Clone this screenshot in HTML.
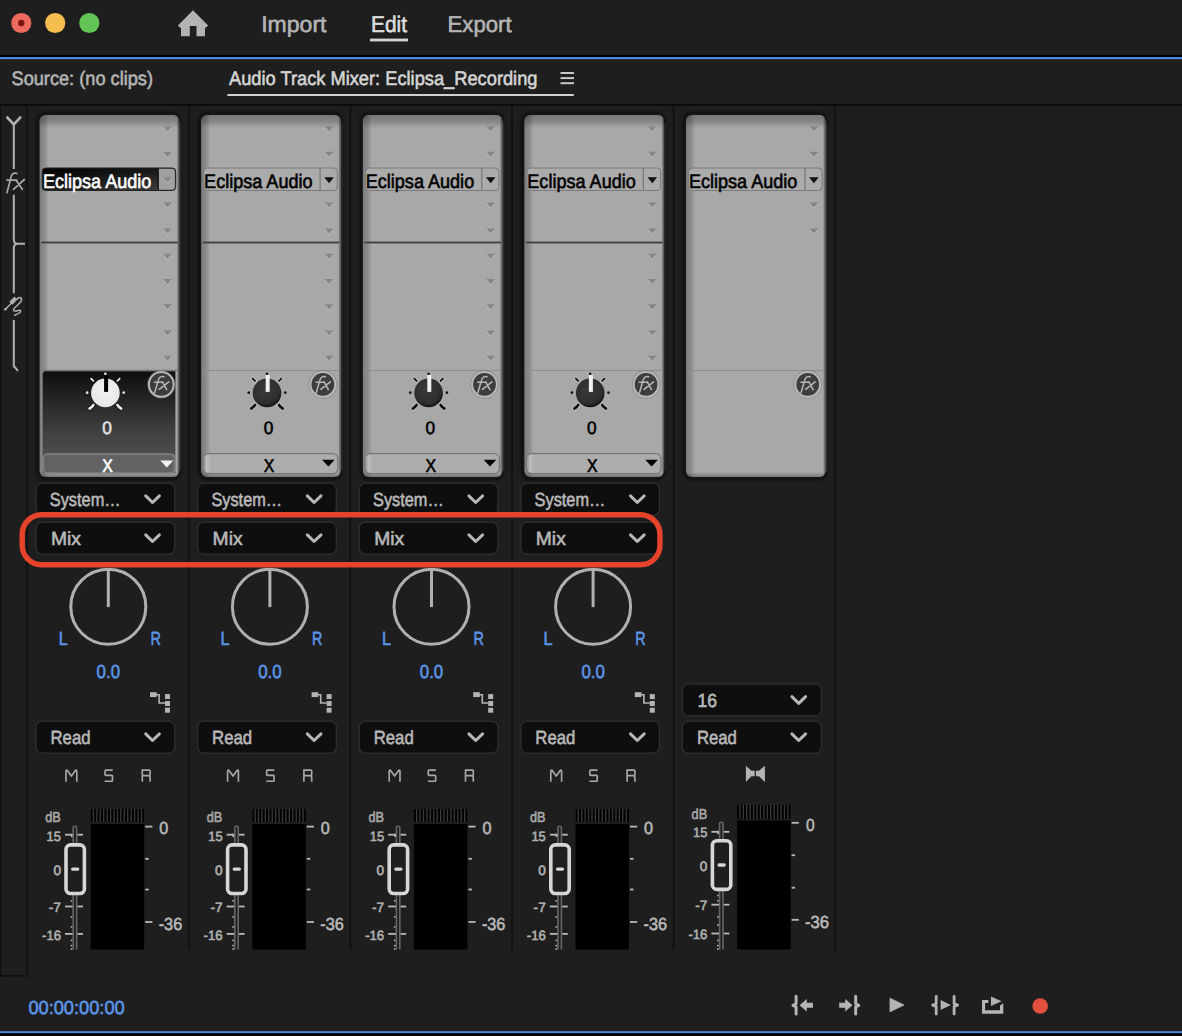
<!DOCTYPE html>
<html><head><meta charset="utf-8"><title>Audio Track Mixer</title>
<style>
html,body{margin:0;padding:0;background:#1e1e1e;overflow:hidden;}
svg{display:block;font-family:"Liberation Sans", sans-serif;}
text{text-rendering:geometricPrecision;}
</style></head><body>
<svg width="1182" height="1036" viewBox="0 0 1182 1036">
<defs>
<filter id="boxsh" x="-10%" y="-10%" width="120%" height="120%"><feGaussianBlur stdDeviation="2.2"/></filter>
<filter id="blur2" x="-50%" y="-50%" width="200%" height="200%"><feGaussianBlur stdDeviation="0.7"/></filter>
<filter id="blur1" x="-20%" y="-20%" width="140%" height="140%"><feGaussianBlur stdDeviation="0.6"/></filter>
<linearGradient id="leftsh" x1="0" y1="0" x2="1" y2="0">
<stop offset="0" stop-color="#000" stop-opacity="0.26"/><stop offset="0.55" stop-color="#000" stop-opacity="0.16"/><stop offset="1" stop-color="#000" stop-opacity="0"/></linearGradient>
<linearGradient id="rightsh" x1="0" y1="0" x2="1" y2="0">
<stop offset="0" stop-color="#000" stop-opacity="0"/><stop offset="1" stop-color="#000" stop-opacity="0.55"/></linearGradient>
<linearGradient id="botsh" x1="0" y1="0" x2="0" y2="1">
<stop offset="0" stop-color="#000" stop-opacity="0"/><stop offset="1" stop-color="#000" stop-opacity="0.3"/></linearGradient>
<linearGradient id="xbl" x1="0" y1="0" x2="1" y2="0">
<stop offset="0" stop-color="#000" stop-opacity="0.08"/><stop offset="0.3" stop-color="#fff" stop-opacity="0.22"/><stop offset="1" stop-color="#fff" stop-opacity="0"/></linearGradient>
<linearGradient id="topsh" x1="0" y1="0" x2="0" y2="1">
<stop offset="0" stop-color="#000" stop-opacity="0.3"/><stop offset="0.5" stop-color="#000" stop-opacity="0.2"/><stop offset="1" stop-color="#000" stop-opacity="0"/></linearGradient>
<linearGradient id="selknob" x1="0" y1="0" x2="0" y2="1">
<stop offset="0" stop-color="#0e0e0e"/><stop offset="0.6" stop-color="#404040"/><stop offset="1" stop-color="#575757"/></linearGradient>
<linearGradient id="seldd" x1="0" y1="0" x2="1" y2="1">
<stop offset="0" stop-color="#000"/><stop offset="0.5" stop-color="#1a1a1a"/><stop offset="1" stop-color="#444"/></linearGradient>
<radialGradient id="knobdark" cx="0.45" cy="0.4" r="0.6">
<stop offset="0" stop-color="#3a3a3a"/><stop offset="0.8" stop-color="#2e2e2e"/><stop offset="1" stop-color="#111"/></radialGradient>
<radialGradient id="knobwhite" cx="0.5" cy="0.45" r="0.6">
<stop offset="0" stop-color="#f2f2f2"/><stop offset="0.85" stop-color="#e8e8e8"/><stop offset="1" stop-color="#bdbdbd"/></radialGradient>
<pattern id="peaks" x="0" y="0" width="3.42" height="20" patternUnits="userSpaceOnUse">
<rect x="0" y="0" width="3.42" height="20" fill="#3a3a3a"/><rect x="0" y="0" width="2.1" height="20" fill="#000"/></pattern>
</defs>
<rect x="0" y="0" width="1182" height="1036" fill="#1e1e1e"/>

<circle cx="21.3" cy="23.0" r="10.1" fill="#ec6a5e"/><circle cx="21.3" cy="23.0" r="3.2" fill="#7a1510"/>
<circle cx="55.2" cy="23.0" r="10.1" fill="#f4bf4f"/>
<circle cx="89.3" cy="23.0" r="10.1" fill="#61c454"/>
<path d="M193 10.3 L208.1 25.4 L205 28.2 L205 36.3 L196.5 36.3 L196.5 26.1 L189.8 26.1 L189.8 36.3 L181 36.3 L181 28.2 L177.9 25.4 Z" fill="#b3b3b3"/>
<text x="261.20" y="32.00" font-size="22.8" fill="#b4b4b4" stroke="#b4b4b4" stroke-width="0.6" stroke-linejoin="round" textLength="65.30" lengthAdjust="spacingAndGlyphs" >Import</text>
<text x="371.00" y="32.00" font-size="22.8" fill="#dcdcdc" stroke="#dcdcdc" stroke-width="0.6" stroke-linejoin="round" textLength="36.00" lengthAdjust="spacingAndGlyphs" >Edit</text>
<rect x="370" y="38.6" width="38" height="2.8" fill="#d4d4d4"/>
<text x="447.60" y="32.00" font-size="22.8" fill="#b4b4b4" stroke="#b4b4b4" stroke-width="0.6" stroke-linejoin="round" textLength="64.00" lengthAdjust="spacingAndGlyphs" >Export</text>
<rect x="0" y="55" width="1182" height="2" fill="#000"/>
<rect x="0" y="57" width="1182" height="2.2" fill="#4f88e0"/>
<text x="11.50" y="85.00" font-size="19.5" fill="#b4b4b4" stroke="#b4b4b4" stroke-width="0.6" stroke-linejoin="round" textLength="141.50" lengthAdjust="spacingAndGlyphs" >Source: (no clips)</text>
<text x="229.00" y="84.80" font-size="19.5" fill="#d4d4d4" stroke="#d4d4d4" stroke-width="0.6" stroke-linejoin="round" textLength="308.50" lengthAdjust="spacingAndGlyphs" >Audio Track Mixer: Eclipsa_Recording</text>
<rect x="227.2" y="94" width="346.8" height="2" rx="1" fill="#d0d0d0"/>
<rect x="560.5" y="72.00" width="13.5" height="2" fill="#c8c8c8"/>
<rect x="560.5" y="77.10" width="13.5" height="2" fill="#c8c8c8"/>
<rect x="560.5" y="82.20" width="13.5" height="2" fill="#c8c8c8"/>
<rect x="0" y="104" width="1182" height="2" fill="#0c0c0c"/>
<rect x="0" y="104" width="1.2" height="873" fill="#0f0f0f"/>
<rect x="26.4" y="104" width="1.6" height="873" fill="#0f0f0f"/>
<rect x="0" y="975" width="28" height="1.6" fill="#0f0f0f"/>
<rect x="188.10" y="105" width="1.5" height="845" fill="#0f0f0f"/>
<rect x="349.70" y="105" width="1.5" height="845" fill="#0f0f0f"/>
<rect x="511.30" y="105" width="1.5" height="845" fill="#0f0f0f"/>
<rect x="672.90" y="105" width="1.5" height="845" fill="#0f0f0f"/>
<rect x="834.50" y="105" width="1.5" height="845" fill="#0f0f0f"/>
<path d="M7.4 117.6 L13.8 124.4 L20.2 117.6" fill="none" stroke="#b0b0b0" stroke-width="2.8" stroke-linecap="round" stroke-linejoin="round"/>
<rect x="12.8" y="123" width="2" height="46" fill="#b0b0b0"/>
<path d="M16.9 173.6 C14.2 172.2 11.8 173.6 11.2 176.5 L7 192.6 M7 180.2 L16.9 180.2 M13.5 189.3 L24.3 179.5 M15.9 179.9 L22.3 189.3" fill="none" stroke="#a8a8a8" stroke-width="1.7" stroke-linecap="round"/>
<path d="M13.8 194.7 L13.8 239.5 Q13.8 243.6 17.5 243.8 L25 243.8 M17.5 243.8 Q13.8 244.2 13.8 248 L13.8 293.2" fill="none" stroke="#b0b0b0" stroke-width="2"/>
<path d="M5.4 309.3 L11.1 303.5" stroke="#b0b0b0" stroke-width="1.5" stroke-linecap="round"/><circle cx="5.4" cy="309.3" r="1.3" fill="#b0b0b0"/>
<path d="M9.8 301.7 L14.5 297.1 L16.9 299.5 L12.5 304.2 Z" fill="#b0b0b0" stroke="#b0b0b0" stroke-width="1" stroke-linejoin="round"/>
<path d="M16.9 299.3 C18.5 297 21.5 296.5 21.6 299.8 C21.6 302 17 305.5 14.5 308 C12.5 310 13.6 311.2 15.5 311 C18 310.6 20.8 309.5 20.6 311.3 C20.4 313 16.5 314.3 14.5 315.3" fill="none" stroke="#b0b0b0" stroke-width="1.5" stroke-linecap="round"/>
<path d="M13.8 320 L13.8 366 L18 370.8" fill="none" stroke="#b0b0b0" stroke-width="2"/>
<rect x="37.70" y="113.00" width="142.00" height="366.00" rx="8" fill="#080808" filter="url(#boxsh)"/>
<rect x="179.50" y="123.00" width="1.6" height="348.00" fill="#333" opacity="0.8"/>
<rect x="39.70" y="115.00" width="139.50" height="362.00" rx="6" fill="#a8a8a8"/>
<clipPath id="bc0"><rect x="39.70" y="115.00" width="139.50" height="362.00" rx="6"/></clipPath>
<g clip-path="url(#bc0)">
<rect x="39.70" y="115.00" width="139.50" height="13" fill="url(#topsh)"/>
<rect x="39.70" y="115.00" width="9" height="362.00" fill="url(#leftsh)"/>
<rect x="39.70" y="472.00" width="139.50" height="5" fill="url(#botsh)"/>
</g>
<rect x="176.60" y="115.00" width="2.6" height="362.00" fill="url(#rightsh)" clip-path="url(#bc0)"/>
<path d="M163.10 127.40 L171.90 127.40 L167.50 132.60 Z" fill="#c8c8c8" opacity="0.7"/>
<path d="M163.10 126.40 L171.90 126.40 L167.50 131.60 Z" fill="#868686"/>
<path d="M163.10 152.80 L171.90 152.80 L167.50 158.00 Z" fill="#c8c8c8" opacity="0.7"/>
<path d="M163.10 151.80 L171.90 151.80 L167.50 157.00 Z" fill="#868686"/>
<path d="M163.10 203.40 L171.90 203.40 L167.50 208.60 Z" fill="#c8c8c8" opacity="0.7"/>
<path d="M163.10 202.40 L171.90 202.40 L167.50 207.60 Z" fill="#868686"/>
<path d="M163.10 229.50 L171.90 229.50 L167.50 234.70 Z" fill="#c8c8c8" opacity="0.7"/>
<path d="M163.10 228.50 L171.90 228.50 L167.50 233.70 Z" fill="#868686"/>
<path d="M163.10 254.70 L171.90 254.70 L167.50 259.90 Z" fill="#c8c8c8" opacity="0.7"/>
<path d="M163.10 253.70 L171.90 253.70 L167.50 258.90 Z" fill="#868686"/>
<path d="M163.10 280.00 L171.90 280.00 L167.50 285.20 Z" fill="#c8c8c8" opacity="0.7"/>
<path d="M163.10 279.00 L171.90 279.00 L167.50 284.20 Z" fill="#868686"/>
<path d="M163.10 305.30 L171.90 305.30 L167.50 310.50 Z" fill="#c8c8c8" opacity="0.7"/>
<path d="M163.10 304.30 L171.90 304.30 L167.50 309.50 Z" fill="#868686"/>
<path d="M163.10 331.40 L171.90 331.40 L167.50 336.60 Z" fill="#c8c8c8" opacity="0.7"/>
<path d="M163.10 330.40 L171.90 330.40 L167.50 335.60 Z" fill="#868686"/>
<path d="M163.10 356.70 L171.90 356.70 L167.50 361.90 Z" fill="#c8c8c8" opacity="0.7"/>
<path d="M163.10 355.70 L171.90 355.70 L167.50 360.90 Z" fill="#868686"/>
<rect x="42.20" y="168.00" width="133.50" height="22.50" rx="3.5" fill="url(#seldd)" stroke="#222" stroke-width="1"/>
<path d="M158.70 168.80 L171.70 168.80 Q174.90 168.80 174.90 172.00 L174.90 186.50 Q174.90 189.70 171.70 189.70 L158.70 189.70 Z" fill="#a0a0a0"/>
<rect x="157.30" y="168.50" width="1.5" height="21.50" fill="#1a1a1a"/>
<path d="M163.10 178.40 L171.90 178.40 L167.50 183.60 Z" fill="#c8c8c8" opacity="0.7"/>
<path d="M163.10 177.40 L171.90 177.40 L167.50 182.60 Z" fill="#868686"/>
<text x="42.90" y="188.00" font-size="19.6" fill="#ffffff" stroke="#ffffff" stroke-width="0.6" stroke-linejoin="round" textLength="108.50" lengthAdjust="spacingAndGlyphs" >Eclipsa Audio</text>
<rect x="41.20" y="241.6" width="136.50" height="1.8" fill="#3c3c3c"/>
<rect x="40.70" y="369.70" width="137.50" height="1.5" fill="#7a7a7a"/>
<path d="M42.70 374.50 Q42.70 371.30 45.90 371.30 L175.40 371.30 L175.40 473.00 L42.70 473.00 Z" fill="url(#selknob)"/>
<circle cx="161.30" cy="384.40" r="14.4" fill="#6a6a6a" opacity="0.35"/>
<circle cx="161.30" cy="384.40" r="12.4" fill="#3c3c3c" stroke="#b8b8b8" stroke-width="2.1"/>
<path d="M163.90 376.80 C161.80 376.00 159.10 376.80 158.40 379.90 L154.60 392.90 M154.50 382.30 L162.10 382.30 M159.20 389.30 L168.70 381.80 M162.50 381.80 L166.70 389.60" fill="none" stroke="#b8b8b8" stroke-width="1.55" stroke-linecap="round"/>
<g opacity="0.75" filter="url(#blur2)"><circle cx="105.40" cy="373.90" r="1.35" fill="#000"/><circle cx="87.10" cy="392.70" r="1.35" fill="#000"/><circle cx="123.70" cy="392.70" r="1.35" fill="#000"/><path d="M91.10 378.60 L93.40 380.90" stroke="#000" stroke-width="3.6" stroke-linecap="round"/><path d="M119.70 378.60 L117.40 380.90" stroke="#000" stroke-width="3.6" stroke-linecap="round"/><path d="M89.60 408.50 Q91.90 407.20 93.40 404.90" fill="none" stroke="#000" stroke-width="4.4" stroke-linecap="round"/><path d="M121.20 408.50 Q118.90 407.20 117.40 404.90" fill="none" stroke="#000" stroke-width="4.4" stroke-linecap="round"/></g>
<circle cx="105.40" cy="373.90" r="1.35" fill="#e8e8e8"/><circle cx="87.10" cy="392.70" r="1.35" fill="#e8e8e8"/><circle cx="123.70" cy="392.70" r="1.35" fill="#e8e8e8"/><path d="M91.10 378.60 L93.40 380.90" stroke="#e8e8e8" stroke-width="1.9" stroke-linecap="round"/><path d="M119.70 378.60 L117.40 380.90" stroke="#e8e8e8" stroke-width="1.9" stroke-linecap="round"/><path d="M89.60 408.50 Q91.90 407.20 93.40 404.90" fill="none" stroke="#e8e8e8" stroke-width="2.7" stroke-linecap="round"/><path d="M121.20 408.50 Q118.90 407.20 117.40 404.90" fill="none" stroke="#e8e8e8" stroke-width="2.7" stroke-linecap="round"/>
<circle cx="105.40" cy="392.90" r="14.3" fill="url(#knobwhite)"/>
<rect x="104.10" y="374.90" width="4" height="17" fill="#000"/>
<text x="102.20" y="433.80" font-size="18" fill="#e0e0e0" stroke="#e0e0e0" stroke-width="0.6" stroke-linejoin="round" textLength="9.60" lengthAdjust="spacingAndGlyphs" >0</text>
<rect x="43.30" y="454" width="131.50" height="19" rx="4.5" fill="#626262" stroke="#828282" stroke-width="1.6"/>
<path d="M160.30 460.5 L173.30 460.5 L166.80 467.5 Z" fill="#f0f0f0"/>
<text x="102.20" y="471.60" font-size="18.5" fill="#ffffff" stroke="#ffffff" stroke-width="0.6" stroke-linejoin="round" textLength="10.60" lengthAdjust="spacingAndGlyphs" >X</text>
<rect x="36.10" y="483.10" width="138.60" height="32.00" rx="6" fill="#0e0e0e" stroke="#303030" stroke-width="1.2"/>
<text x="49.80" y="506.30" font-size="19" fill="#b8b8b8" stroke="#b8b8b8" stroke-width="0.6" stroke-linejoin="round" textLength="70.80" lengthAdjust="spacingAndGlyphs" >System…</text>
<path d="M145.70 495.90 L152.50 502.50 L159.40 495.90" fill="none" stroke="#b8b8b8" stroke-width="3.0" stroke-linecap="round" stroke-linejoin="round"/>
<rect x="36.10" y="522.10" width="138.60" height="32.00" rx="6" fill="#0e0e0e" stroke="#303030" stroke-width="1.2"/>
<text x="51.00" y="545.30" font-size="19" fill="#b8b8b8" stroke="#b8b8b8" stroke-width="0.6" stroke-linejoin="round" textLength="30.00" lengthAdjust="spacingAndGlyphs" >Mix</text>
<path d="M145.70 534.90 L152.50 541.50 L159.40 534.90" fill="none" stroke="#b8b8b8" stroke-width="3.0" stroke-linecap="round" stroke-linejoin="round"/>
<circle cx="108.30" cy="606.7" r="37.5" fill="none" stroke="#b0b0b0" stroke-width="3"/>
<rect x="106.80" y="568.5" width="3" height="38.6" fill="#b0b0b0"/>
<text x="58.80" y="645.00" font-size="19" fill="#5b95e8" stroke="#5b95e8" stroke-width="0.6" stroke-linejoin="round" textLength="9.00" lengthAdjust="spacingAndGlyphs" >L</text>
<text x="150.40" y="645.00" font-size="19" fill="#5b95e8" stroke="#5b95e8" stroke-width="0.6" stroke-linejoin="round" textLength="10.40" lengthAdjust="spacingAndGlyphs" >R</text>
<text x="96.60" y="677.60" font-size="19" fill="#5b95e8" stroke="#5b95e8" stroke-width="0.6" stroke-linejoin="round" textLength="23.40" lengthAdjust="spacingAndGlyphs" >0.0</text>
<rect x="150.00" y="692.2" width="6.6" height="4.9" fill="#b4b4b4"/>
<path d="M156.00 694.8 L159.10 694.8 L159.10 703 L165.00 703" fill="none" stroke="#b4b4b4" stroke-width="1.6"/>
<rect x="165.00" y="694.10" width="5" height="5" fill="#b4b4b4"/>
<rect x="165.00" y="701.00" width="5" height="5" fill="#b4b4b4"/>
<rect x="165.00" y="707.70" width="5" height="5" fill="#b4b4b4"/>
<rect x="36.10" y="721.10" width="138.60" height="32.00" rx="6" fill="#0e0e0e" stroke="#303030" stroke-width="1.2"/>
<text x="50.50" y="744.30" font-size="19" fill="#b8b8b8" stroke="#b8b8b8" stroke-width="0.6" stroke-linejoin="round" textLength="40.00" lengthAdjust="spacingAndGlyphs" >Read</text>
<path d="M145.70 733.90 L152.50 740.50 L159.40 733.90" fill="none" stroke="#b8b8b8" stroke-width="3.0" stroke-linecap="round" stroke-linejoin="round"/>
<path d="M66.00 781.70 L66.00 771.10 Q66.00 770.10 67.00 770.10 L71.40 776.10 L75.80 770.10 Q76.80 770.10 76.80 771.10 L76.80 781.70" fill="none" stroke="#a8a8a8" stroke-width="1.65" stroke-linejoin="round"/>
<path d="M112.65 770.10 L105.85 770.10 Q105.05 770.10 105.05 770.90 L105.05 774.50 Q105.05 775.30 105.85 775.30 L111.65 775.30 Q112.45 775.30 112.45 776.10 L112.45 780.40 Q112.45 781.20 111.65 781.20 L104.65 781.20" fill="none" stroke="#a8a8a8" stroke-width="1.65"/>
<path d="M142.30 781.70 L142.30 770.10 L149.20 770.10 Q150.10 770.10 150.10 771.00 L150.10 774.70 Q150.10 775.60 149.20 775.60 L142.30 775.60 M148.00 775.60 Q150.10 775.60 150.10 777.60 L150.10 781.70" fill="none" stroke="#a8a8a8" stroke-width="1.65"/>
<text x="45.20" y="822.00" font-size="14.5" fill="#a8a8a8" stroke="#a8a8a8" stroke-width="0.6" stroke-linejoin="round" textLength="15.50" lengthAdjust="spacingAndGlyphs" >dB</text>
<rect x="90.70" y="809.00" width="53.5" height="13.00" fill="#3a3a3a"/>
<rect x="90.70" y="809.00" width="2.1" height="13.00" fill="#000"/>
<rect x="94.13" y="809.00" width="2.1" height="13.00" fill="#000"/>
<rect x="97.55" y="809.00" width="2.1" height="13.00" fill="#000"/>
<rect x="100.98" y="809.00" width="2.1" height="13.00" fill="#000"/>
<rect x="104.41" y="809.00" width="2.1" height="13.00" fill="#000"/>
<rect x="107.84" y="809.00" width="2.1" height="13.00" fill="#000"/>
<rect x="111.26" y="809.00" width="2.1" height="13.00" fill="#000"/>
<rect x="114.69" y="809.00" width="2.1" height="13.00" fill="#000"/>
<rect x="118.12" y="809.00" width="2.1" height="13.00" fill="#000"/>
<rect x="121.54" y="809.00" width="2.1" height="13.00" fill="#000"/>
<rect x="124.97" y="809.00" width="2.1" height="13.00" fill="#000"/>
<rect x="128.40" y="809.00" width="2.1" height="13.00" fill="#000"/>
<rect x="131.82" y="809.00" width="2.1" height="13.00" fill="#000"/>
<rect x="135.25" y="809.00" width="2.1" height="13.00" fill="#000"/>
<rect x="138.68" y="809.00" width="2.1" height="13.00" fill="#000"/>
<rect x="142.11" y="809.00" width="2.1" height="13.00" fill="#000"/>
<rect x="90.70" y="824.10" width="53.5" height="125.40" fill="#000"/>
<path d="M73.20 949.5 L73.20 827.20 Q73.20 826.20 74.90 826.20 Q76.60 826.20 76.60 827.20 L76.60 949.5" fill="none" stroke="#666" stroke-width="1.6"/>
<text x="46.60" y="840.50" font-size="13.5" fill="#b0b0b0" stroke="#b0b0b0" stroke-width="0.6" stroke-linejoin="round" textLength="14.40" lengthAdjust="spacingAndGlyphs" >15</text>
<text x="53.40" y="874.50" font-size="13.5" fill="#b0b0b0" stroke="#b0b0b0" stroke-width="0.6" stroke-linejoin="round" textLength="7.60" lengthAdjust="spacingAndGlyphs" >0</text>
<text x="48.80" y="912.10" font-size="13.5" fill="#b0b0b0" stroke="#b0b0b0" stroke-width="0.6" stroke-linejoin="round" textLength="12.20" lengthAdjust="spacingAndGlyphs" >-7</text>
<text x="42.00" y="939.50" font-size="13.5" fill="#b0b0b0" stroke="#b0b0b0" stroke-width="0.6" stroke-linejoin="round" textLength="19.00" lengthAdjust="spacingAndGlyphs" >-16</text>
<rect x="65.00" y="833.80" width="7.6" height="1.8" fill="#b8b8b8"/>
<rect x="70.80" y="833.80" width="1.6" height="3.2" fill="#b8b8b8"/>
<rect x="77.40" y="833.80" width="5.6" height="1.8" fill="#b8b8b8"/>
<rect x="65.00" y="905.60" width="7.6" height="1.8" fill="#b8b8b8"/>
<rect x="77.40" y="905.60" width="5.6" height="1.8" fill="#b8b8b8"/>
<rect x="65.00" y="933.00" width="7.6" height="1.8" fill="#b8b8b8"/>
<rect x="77.40" y="933.00" width="5.6" height="1.8" fill="#b8b8b8"/>
<rect x="70.70" y="900.00" width="1.6" height="1.6" fill="#b0b0b0"/>
<rect x="70.70" y="916.10" width="1.6" height="1.6" fill="#b0b0b0"/>
<rect x="70.70" y="926.10" width="1.6" height="1.6" fill="#b0b0b0"/>
<rect x="70.70" y="939.60" width="1.6" height="1.6" fill="#b0b0b0"/>
<rect x="70.70" y="944.80" width="1.6" height="1.6" fill="#b0b0b0"/>
<rect x="70.70" y="948.30" width="1.6" height="1.6" fill="#b0b0b0"/>
<rect x="66.00" y="844.90" width="18.4" height="48.6" rx="4.5" fill="#1e1e1e" stroke="#d6d6d6" stroke-width="3.6"/>
<rect x="71.00" y="867.40" width="8.4" height="3.4" rx="1.7" fill="#d6d6d6"/>
<rect x="145.20" y="825.70" width="7.2" height="1.8" fill="#b8b8b8"/>
<rect x="145.20" y="857.90" width="3.5" height="1.8" fill="#b8b8b8"/>
<rect x="145.20" y="888.60" width="3.5" height="1.8" fill="#b8b8b8"/>
<rect x="145.20" y="921.10" width="7.2" height="1.8" fill="#b8b8b8"/>
<text x="159.20" y="834.30" font-size="17.5" fill="#b8b8b8" stroke="#b8b8b8" stroke-width="0.6" stroke-linejoin="round" textLength="9.00" lengthAdjust="spacingAndGlyphs" >0</text>
<text x="158.70" y="930.00" font-size="17.5" fill="#b8b8b8" stroke="#b8b8b8" stroke-width="0.6" stroke-linejoin="round" textLength="23.50" lengthAdjust="spacingAndGlyphs" >-36</text>
<rect x="199.30" y="113.00" width="142.00" height="366.00" rx="8" fill="#080808" filter="url(#boxsh)"/>
<rect x="341.10" y="123.00" width="1.6" height="348.00" fill="#333" opacity="0.8"/>
<rect x="201.30" y="115.00" width="139.50" height="362.00" rx="6" fill="#a8a8a8"/>
<clipPath id="bc1"><rect x="201.30" y="115.00" width="139.50" height="362.00" rx="6"/></clipPath>
<g clip-path="url(#bc1)">
<rect x="201.30" y="115.00" width="139.50" height="13" fill="url(#topsh)"/>
<rect x="201.30" y="115.00" width="9" height="362.00" fill="url(#leftsh)"/>
<rect x="201.30" y="472.00" width="139.50" height="5" fill="url(#botsh)"/>
</g>
<rect x="338.20" y="115.00" width="2.6" height="362.00" fill="url(#rightsh)" clip-path="url(#bc1)"/>
<path d="M324.70 127.40 L333.50 127.40 L329.10 132.60 Z" fill="#c8c8c8" opacity="0.7"/>
<path d="M324.70 126.40 L333.50 126.40 L329.10 131.60 Z" fill="#868686"/>
<path d="M324.70 152.80 L333.50 152.80 L329.10 158.00 Z" fill="#c8c8c8" opacity="0.7"/>
<path d="M324.70 151.80 L333.50 151.80 L329.10 157.00 Z" fill="#868686"/>
<path d="M324.70 203.40 L333.50 203.40 L329.10 208.60 Z" fill="#c8c8c8" opacity="0.7"/>
<path d="M324.70 202.40 L333.50 202.40 L329.10 207.60 Z" fill="#868686"/>
<path d="M324.70 229.50 L333.50 229.50 L329.10 234.70 Z" fill="#c8c8c8" opacity="0.7"/>
<path d="M324.70 228.50 L333.50 228.50 L329.10 233.70 Z" fill="#868686"/>
<path d="M324.70 254.70 L333.50 254.70 L329.10 259.90 Z" fill="#c8c8c8" opacity="0.7"/>
<path d="M324.70 253.70 L333.50 253.70 L329.10 258.90 Z" fill="#868686"/>
<path d="M324.70 280.00 L333.50 280.00 L329.10 285.20 Z" fill="#c8c8c8" opacity="0.7"/>
<path d="M324.70 279.00 L333.50 279.00 L329.10 284.20 Z" fill="#868686"/>
<path d="M324.70 305.30 L333.50 305.30 L329.10 310.50 Z" fill="#c8c8c8" opacity="0.7"/>
<path d="M324.70 304.30 L333.50 304.30 L329.10 309.50 Z" fill="#868686"/>
<path d="M324.70 331.40 L333.50 331.40 L329.10 336.60 Z" fill="#c8c8c8" opacity="0.7"/>
<path d="M324.70 330.40 L333.50 330.40 L329.10 335.60 Z" fill="#868686"/>
<path d="M324.70 356.70 L333.50 356.70 L329.10 361.90 Z" fill="#c8c8c8" opacity="0.7"/>
<path d="M324.70 355.70 L333.50 355.70 L329.10 360.90 Z" fill="#868686"/>
<rect x="203.80" y="168.00" width="133.50" height="22.50" rx="3.5" fill="#ababab" stroke="#7a7a7a" stroke-width="1"/>
<rect x="319.50" y="168.00" width="1.3" height="22.50" fill="#7a7a7a"/>
<path d="M324.30 177.3 L333.90 177.3 L329.10 183.2 Z" fill="#111"/>
<text x="204.10" y="188.00" font-size="19.6" fill="#000000" stroke="#000000" stroke-width="0.6" stroke-linejoin="round" textLength="108.50" lengthAdjust="spacingAndGlyphs" >Eclipsa Audio</text>
<rect x="202.80" y="241.6" width="136.50" height="1.8" fill="#3c3c3c"/>
<path d="M202.80 376.50 Q202.80 370.50 207.80 370.50 L338.80 370.50" fill="none" stroke="#8e8e8e" stroke-width="1.2"/>
<circle cx="322.90" cy="384.40" r="14.4" fill="#6a6a6a" opacity="0.35"/>
<circle cx="322.90" cy="384.40" r="12.4" fill="#3e3e3e" stroke="#b8b8b8" stroke-width="2.1"/>
<path d="M325.50 376.80 C323.40 376.00 320.70 376.80 320.00 379.90 L316.20 392.90 M316.10 382.30 L323.70 382.30 M320.80 389.30 L330.30 381.80 M324.10 381.80 L328.30 389.60" fill="none" stroke="#b8b8b8" stroke-width="1.55" stroke-linecap="round"/>
<g opacity="0.75" filter="url(#blur2)"><circle cx="267.00" cy="373.90" r="1.35" fill="#d0d0d0"/><circle cx="248.70" cy="392.70" r="1.35" fill="#d0d0d0"/><circle cx="285.30" cy="392.70" r="1.35" fill="#d0d0d0"/><path d="M252.70 378.60 L255.00 380.90" stroke="#d0d0d0" stroke-width="3.6" stroke-linecap="round"/><path d="M281.30 378.60 L279.00 380.90" stroke="#d0d0d0" stroke-width="3.6" stroke-linecap="round"/><path d="M251.20 408.50 Q253.50 407.20 255.00 404.90" fill="none" stroke="#d0d0d0" stroke-width="4.4" stroke-linecap="round"/><path d="M282.80 408.50 Q280.50 407.20 279.00 404.90" fill="none" stroke="#d0d0d0" stroke-width="4.4" stroke-linecap="round"/></g>
<circle cx="267.00" cy="373.90" r="1.35" fill="#111"/><circle cx="248.70" cy="392.70" r="1.35" fill="#111"/><circle cx="285.30" cy="392.70" r="1.35" fill="#111"/><path d="M252.70 378.60 L255.00 380.90" stroke="#111" stroke-width="1.9" stroke-linecap="round"/><path d="M281.30 378.60 L279.00 380.90" stroke="#111" stroke-width="1.9" stroke-linecap="round"/><path d="M251.20 408.50 Q253.50 407.20 255.00 404.90" fill="none" stroke="#111" stroke-width="2.7" stroke-linecap="round"/><path d="M282.80 408.50 Q280.50 407.20 279.00 404.90" fill="none" stroke="#111" stroke-width="2.7" stroke-linecap="round"/>
<circle cx="267.00" cy="392.90" r="14.3" fill="url(#knobdark)"/>
<rect x="265.70" y="374.90" width="4" height="17" fill="#f0f0f0"/>
<text x="263.80" y="433.80" font-size="18" fill="#000" stroke="#000" stroke-width="0.6" stroke-linejoin="round" textLength="9.60" lengthAdjust="spacingAndGlyphs" >0</text>
<rect x="203.30" y="453.6" width="134.50" height="20" rx="5" fill="#adadad" stroke="#777" stroke-width="1.2"/>
<rect x="204.30" y="455" width="7" height="17" fill="url(#xbl)"/>
<path d="M322.10 459.8 L334.70 459.8 L328.40 466.6 Z" fill="#000"/>
<text x="263.80" y="471.60" font-size="18.5" fill="#000000" stroke="#000000" stroke-width="0.6" stroke-linejoin="round" textLength="10.60" lengthAdjust="spacingAndGlyphs" >X</text>
<rect x="197.70" y="483.10" width="138.60" height="32.00" rx="6" fill="#0e0e0e" stroke="#303030" stroke-width="1.2"/>
<text x="211.40" y="506.30" font-size="19" fill="#b8b8b8" stroke="#b8b8b8" stroke-width="0.6" stroke-linejoin="round" textLength="70.80" lengthAdjust="spacingAndGlyphs" >System…</text>
<path d="M307.30 495.90 L314.10 502.50 L321.00 495.90" fill="none" stroke="#b8b8b8" stroke-width="3.0" stroke-linecap="round" stroke-linejoin="round"/>
<rect x="197.70" y="522.10" width="138.60" height="32.00" rx="6" fill="#0e0e0e" stroke="#303030" stroke-width="1.2"/>
<text x="212.60" y="545.30" font-size="19" fill="#b8b8b8" stroke="#b8b8b8" stroke-width="0.6" stroke-linejoin="round" textLength="30.00" lengthAdjust="spacingAndGlyphs" >Mix</text>
<path d="M307.30 534.90 L314.10 541.50 L321.00 534.90" fill="none" stroke="#b8b8b8" stroke-width="3.0" stroke-linecap="round" stroke-linejoin="round"/>
<circle cx="269.90" cy="606.7" r="37.5" fill="none" stroke="#b0b0b0" stroke-width="3"/>
<rect x="268.40" y="568.5" width="3" height="38.6" fill="#b0b0b0"/>
<text x="220.40" y="645.00" font-size="19" fill="#5b95e8" stroke="#5b95e8" stroke-width="0.6" stroke-linejoin="round" textLength="9.00" lengthAdjust="spacingAndGlyphs" >L</text>
<text x="312.00" y="645.00" font-size="19" fill="#5b95e8" stroke="#5b95e8" stroke-width="0.6" stroke-linejoin="round" textLength="10.40" lengthAdjust="spacingAndGlyphs" >R</text>
<text x="258.20" y="677.60" font-size="19" fill="#5b95e8" stroke="#5b95e8" stroke-width="0.6" stroke-linejoin="round" textLength="23.40" lengthAdjust="spacingAndGlyphs" >0.0</text>
<rect x="311.60" y="692.2" width="6.6" height="4.9" fill="#b4b4b4"/>
<path d="M317.60 694.8 L320.70 694.8 L320.70 703 L326.60 703" fill="none" stroke="#b4b4b4" stroke-width="1.6"/>
<rect x="326.60" y="694.10" width="5" height="5" fill="#b4b4b4"/>
<rect x="326.60" y="701.00" width="5" height="5" fill="#b4b4b4"/>
<rect x="326.60" y="707.70" width="5" height="5" fill="#b4b4b4"/>
<rect x="197.70" y="721.10" width="138.60" height="32.00" rx="6" fill="#0e0e0e" stroke="#303030" stroke-width="1.2"/>
<text x="212.10" y="744.30" font-size="19" fill="#b8b8b8" stroke="#b8b8b8" stroke-width="0.6" stroke-linejoin="round" textLength="40.00" lengthAdjust="spacingAndGlyphs" >Read</text>
<path d="M307.30 733.90 L314.10 740.50 L321.00 733.90" fill="none" stroke="#b8b8b8" stroke-width="3.0" stroke-linecap="round" stroke-linejoin="round"/>
<path d="M227.60 781.70 L227.60 771.10 Q227.60 770.10 228.60 770.10 L233.00 776.10 L237.40 770.10 Q238.40 770.10 238.40 771.10 L238.40 781.70" fill="none" stroke="#a8a8a8" stroke-width="1.65" stroke-linejoin="round"/>
<path d="M274.25 770.10 L267.45 770.10 Q266.65 770.10 266.65 770.90 L266.65 774.50 Q266.65 775.30 267.45 775.30 L273.25 775.30 Q274.05 775.30 274.05 776.10 L274.05 780.40 Q274.05 781.20 273.25 781.20 L266.25 781.20" fill="none" stroke="#a8a8a8" stroke-width="1.65"/>
<path d="M303.90 781.70 L303.90 770.10 L310.80 770.10 Q311.70 770.10 311.70 771.00 L311.70 774.70 Q311.70 775.60 310.80 775.60 L303.90 775.60 M309.60 775.60 Q311.70 775.60 311.70 777.60 L311.70 781.70" fill="none" stroke="#a8a8a8" stroke-width="1.65"/>
<text x="206.80" y="822.00" font-size="14.5" fill="#a8a8a8" stroke="#a8a8a8" stroke-width="0.6" stroke-linejoin="round" textLength="15.50" lengthAdjust="spacingAndGlyphs" >dB</text>
<rect x="252.30" y="809.00" width="53.5" height="13.00" fill="#3a3a3a"/>
<rect x="252.30" y="809.00" width="2.1" height="13.00" fill="#000"/>
<rect x="255.73" y="809.00" width="2.1" height="13.00" fill="#000"/>
<rect x="259.15" y="809.00" width="2.1" height="13.00" fill="#000"/>
<rect x="262.58" y="809.00" width="2.1" height="13.00" fill="#000"/>
<rect x="266.01" y="809.00" width="2.1" height="13.00" fill="#000"/>
<rect x="269.44" y="809.00" width="2.1" height="13.00" fill="#000"/>
<rect x="272.86" y="809.00" width="2.1" height="13.00" fill="#000"/>
<rect x="276.29" y="809.00" width="2.1" height="13.00" fill="#000"/>
<rect x="279.72" y="809.00" width="2.1" height="13.00" fill="#000"/>
<rect x="283.14" y="809.00" width="2.1" height="13.00" fill="#000"/>
<rect x="286.57" y="809.00" width="2.1" height="13.00" fill="#000"/>
<rect x="290.00" y="809.00" width="2.1" height="13.00" fill="#000"/>
<rect x="293.42" y="809.00" width="2.1" height="13.00" fill="#000"/>
<rect x="296.85" y="809.00" width="2.1" height="13.00" fill="#000"/>
<rect x="300.28" y="809.00" width="2.1" height="13.00" fill="#000"/>
<rect x="303.70" y="809.00" width="2.1" height="13.00" fill="#000"/>
<rect x="252.30" y="824.10" width="53.5" height="125.40" fill="#000"/>
<path d="M234.80 949.5 L234.80 827.20 Q234.80 826.20 236.50 826.20 Q238.20 826.20 238.20 827.20 L238.20 949.5" fill="none" stroke="#666" stroke-width="1.6"/>
<text x="208.20" y="840.50" font-size="13.5" fill="#b0b0b0" stroke="#b0b0b0" stroke-width="0.6" stroke-linejoin="round" textLength="14.40" lengthAdjust="spacingAndGlyphs" >15</text>
<text x="215.00" y="874.50" font-size="13.5" fill="#b0b0b0" stroke="#b0b0b0" stroke-width="0.6" stroke-linejoin="round" textLength="7.60" lengthAdjust="spacingAndGlyphs" >0</text>
<text x="210.40" y="912.10" font-size="13.5" fill="#b0b0b0" stroke="#b0b0b0" stroke-width="0.6" stroke-linejoin="round" textLength="12.20" lengthAdjust="spacingAndGlyphs" >-7</text>
<text x="203.60" y="939.50" font-size="13.5" fill="#b0b0b0" stroke="#b0b0b0" stroke-width="0.6" stroke-linejoin="round" textLength="19.00" lengthAdjust="spacingAndGlyphs" >-16</text>
<rect x="226.60" y="833.80" width="7.6" height="1.8" fill="#b8b8b8"/>
<rect x="232.40" y="833.80" width="1.6" height="3.2" fill="#b8b8b8"/>
<rect x="239.00" y="833.80" width="5.6" height="1.8" fill="#b8b8b8"/>
<rect x="226.60" y="905.60" width="7.6" height="1.8" fill="#b8b8b8"/>
<rect x="239.00" y="905.60" width="5.6" height="1.8" fill="#b8b8b8"/>
<rect x="226.60" y="933.00" width="7.6" height="1.8" fill="#b8b8b8"/>
<rect x="239.00" y="933.00" width="5.6" height="1.8" fill="#b8b8b8"/>
<rect x="232.30" y="900.00" width="1.6" height="1.6" fill="#b0b0b0"/>
<rect x="232.30" y="916.10" width="1.6" height="1.6" fill="#b0b0b0"/>
<rect x="232.30" y="926.10" width="1.6" height="1.6" fill="#b0b0b0"/>
<rect x="232.30" y="939.60" width="1.6" height="1.6" fill="#b0b0b0"/>
<rect x="232.30" y="944.80" width="1.6" height="1.6" fill="#b0b0b0"/>
<rect x="232.30" y="948.30" width="1.6" height="1.6" fill="#b0b0b0"/>
<rect x="227.60" y="844.90" width="18.4" height="48.6" rx="4.5" fill="#1e1e1e" stroke="#d6d6d6" stroke-width="3.6"/>
<rect x="232.60" y="867.40" width="8.4" height="3.4" rx="1.7" fill="#d6d6d6"/>
<rect x="306.80" y="825.70" width="7.2" height="1.8" fill="#b8b8b8"/>
<rect x="306.80" y="857.90" width="3.5" height="1.8" fill="#b8b8b8"/>
<rect x="306.80" y="888.60" width="3.5" height="1.8" fill="#b8b8b8"/>
<rect x="306.80" y="921.10" width="7.2" height="1.8" fill="#b8b8b8"/>
<text x="320.80" y="834.30" font-size="17.5" fill="#b8b8b8" stroke="#b8b8b8" stroke-width="0.6" stroke-linejoin="round" textLength="9.00" lengthAdjust="spacingAndGlyphs" >0</text>
<text x="320.30" y="930.00" font-size="17.5" fill="#b8b8b8" stroke="#b8b8b8" stroke-width="0.6" stroke-linejoin="round" textLength="23.50" lengthAdjust="spacingAndGlyphs" >-36</text>
<rect x="360.90" y="113.00" width="142.00" height="366.00" rx="8" fill="#080808" filter="url(#boxsh)"/>
<rect x="502.70" y="123.00" width="1.6" height="348.00" fill="#333" opacity="0.8"/>
<rect x="362.90" y="115.00" width="139.50" height="362.00" rx="6" fill="#a8a8a8"/>
<clipPath id="bc2"><rect x="362.90" y="115.00" width="139.50" height="362.00" rx="6"/></clipPath>
<g clip-path="url(#bc2)">
<rect x="362.90" y="115.00" width="139.50" height="13" fill="url(#topsh)"/>
<rect x="362.90" y="115.00" width="9" height="362.00" fill="url(#leftsh)"/>
<rect x="362.90" y="472.00" width="139.50" height="5" fill="url(#botsh)"/>
</g>
<rect x="499.80" y="115.00" width="2.6" height="362.00" fill="url(#rightsh)" clip-path="url(#bc2)"/>
<path d="M486.30 127.40 L495.10 127.40 L490.70 132.60 Z" fill="#c8c8c8" opacity="0.7"/>
<path d="M486.30 126.40 L495.10 126.40 L490.70 131.60 Z" fill="#868686"/>
<path d="M486.30 152.80 L495.10 152.80 L490.70 158.00 Z" fill="#c8c8c8" opacity="0.7"/>
<path d="M486.30 151.80 L495.10 151.80 L490.70 157.00 Z" fill="#868686"/>
<path d="M486.30 203.40 L495.10 203.40 L490.70 208.60 Z" fill="#c8c8c8" opacity="0.7"/>
<path d="M486.30 202.40 L495.10 202.40 L490.70 207.60 Z" fill="#868686"/>
<path d="M486.30 229.50 L495.10 229.50 L490.70 234.70 Z" fill="#c8c8c8" opacity="0.7"/>
<path d="M486.30 228.50 L495.10 228.50 L490.70 233.70 Z" fill="#868686"/>
<path d="M486.30 254.70 L495.10 254.70 L490.70 259.90 Z" fill="#c8c8c8" opacity="0.7"/>
<path d="M486.30 253.70 L495.10 253.70 L490.70 258.90 Z" fill="#868686"/>
<path d="M486.30 280.00 L495.10 280.00 L490.70 285.20 Z" fill="#c8c8c8" opacity="0.7"/>
<path d="M486.30 279.00 L495.10 279.00 L490.70 284.20 Z" fill="#868686"/>
<path d="M486.30 305.30 L495.10 305.30 L490.70 310.50 Z" fill="#c8c8c8" opacity="0.7"/>
<path d="M486.30 304.30 L495.10 304.30 L490.70 309.50 Z" fill="#868686"/>
<path d="M486.30 331.40 L495.10 331.40 L490.70 336.60 Z" fill="#c8c8c8" opacity="0.7"/>
<path d="M486.30 330.40 L495.10 330.40 L490.70 335.60 Z" fill="#868686"/>
<path d="M486.30 356.70 L495.10 356.70 L490.70 361.90 Z" fill="#c8c8c8" opacity="0.7"/>
<path d="M486.30 355.70 L495.10 355.70 L490.70 360.90 Z" fill="#868686"/>
<rect x="365.40" y="168.00" width="133.50" height="22.50" rx="3.5" fill="#ababab" stroke="#7a7a7a" stroke-width="1"/>
<rect x="481.10" y="168.00" width="1.3" height="22.50" fill="#7a7a7a"/>
<path d="M485.90 177.3 L495.50 177.3 L490.70 183.2 Z" fill="#111"/>
<text x="365.70" y="188.00" font-size="19.6" fill="#000000" stroke="#000000" stroke-width="0.6" stroke-linejoin="round" textLength="108.50" lengthAdjust="spacingAndGlyphs" >Eclipsa Audio</text>
<rect x="364.40" y="241.6" width="136.50" height="1.8" fill="#3c3c3c"/>
<path d="M364.40 376.50 Q364.40 370.50 369.40 370.50 L500.40 370.50" fill="none" stroke="#8e8e8e" stroke-width="1.2"/>
<circle cx="484.50" cy="384.40" r="14.4" fill="#6a6a6a" opacity="0.35"/>
<circle cx="484.50" cy="384.40" r="12.4" fill="#3e3e3e" stroke="#b8b8b8" stroke-width="2.1"/>
<path d="M487.10 376.80 C485.00 376.00 482.30 376.80 481.60 379.90 L477.80 392.90 M477.70 382.30 L485.30 382.30 M482.40 389.30 L491.90 381.80 M485.70 381.80 L489.90 389.60" fill="none" stroke="#b8b8b8" stroke-width="1.55" stroke-linecap="round"/>
<g opacity="0.75" filter="url(#blur2)"><circle cx="428.60" cy="373.90" r="1.35" fill="#d0d0d0"/><circle cx="410.30" cy="392.70" r="1.35" fill="#d0d0d0"/><circle cx="446.90" cy="392.70" r="1.35" fill="#d0d0d0"/><path d="M414.30 378.60 L416.60 380.90" stroke="#d0d0d0" stroke-width="3.6" stroke-linecap="round"/><path d="M442.90 378.60 L440.60 380.90" stroke="#d0d0d0" stroke-width="3.6" stroke-linecap="round"/><path d="M412.80 408.50 Q415.10 407.20 416.60 404.90" fill="none" stroke="#d0d0d0" stroke-width="4.4" stroke-linecap="round"/><path d="M444.40 408.50 Q442.10 407.20 440.60 404.90" fill="none" stroke="#d0d0d0" stroke-width="4.4" stroke-linecap="round"/></g>
<circle cx="428.60" cy="373.90" r="1.35" fill="#111"/><circle cx="410.30" cy="392.70" r="1.35" fill="#111"/><circle cx="446.90" cy="392.70" r="1.35" fill="#111"/><path d="M414.30 378.60 L416.60 380.90" stroke="#111" stroke-width="1.9" stroke-linecap="round"/><path d="M442.90 378.60 L440.60 380.90" stroke="#111" stroke-width="1.9" stroke-linecap="round"/><path d="M412.80 408.50 Q415.10 407.20 416.60 404.90" fill="none" stroke="#111" stroke-width="2.7" stroke-linecap="round"/><path d="M444.40 408.50 Q442.10 407.20 440.60 404.90" fill="none" stroke="#111" stroke-width="2.7" stroke-linecap="round"/>
<circle cx="428.60" cy="392.90" r="14.3" fill="url(#knobdark)"/>
<rect x="427.30" y="374.90" width="4" height="17" fill="#f0f0f0"/>
<text x="425.40" y="433.80" font-size="18" fill="#000" stroke="#000" stroke-width="0.6" stroke-linejoin="round" textLength="9.60" lengthAdjust="spacingAndGlyphs" >0</text>
<rect x="364.90" y="453.6" width="134.50" height="20" rx="5" fill="#adadad" stroke="#777" stroke-width="1.2"/>
<rect x="365.90" y="455" width="7" height="17" fill="url(#xbl)"/>
<path d="M483.70 459.8 L496.30 459.8 L490.00 466.6 Z" fill="#000"/>
<text x="425.40" y="471.60" font-size="18.5" fill="#000000" stroke="#000000" stroke-width="0.6" stroke-linejoin="round" textLength="10.60" lengthAdjust="spacingAndGlyphs" >X</text>
<rect x="359.30" y="483.10" width="138.60" height="32.00" rx="6" fill="#0e0e0e" stroke="#303030" stroke-width="1.2"/>
<text x="373.00" y="506.30" font-size="19" fill="#b8b8b8" stroke="#b8b8b8" stroke-width="0.6" stroke-linejoin="round" textLength="70.80" lengthAdjust="spacingAndGlyphs" >System…</text>
<path d="M468.90 495.90 L475.70 502.50 L482.60 495.90" fill="none" stroke="#b8b8b8" stroke-width="3.0" stroke-linecap="round" stroke-linejoin="round"/>
<rect x="359.30" y="522.10" width="138.60" height="32.00" rx="6" fill="#0e0e0e" stroke="#303030" stroke-width="1.2"/>
<text x="374.20" y="545.30" font-size="19" fill="#b8b8b8" stroke="#b8b8b8" stroke-width="0.6" stroke-linejoin="round" textLength="30.00" lengthAdjust="spacingAndGlyphs" >Mix</text>
<path d="M468.90 534.90 L475.70 541.50 L482.60 534.90" fill="none" stroke="#b8b8b8" stroke-width="3.0" stroke-linecap="round" stroke-linejoin="round"/>
<circle cx="431.50" cy="606.7" r="37.5" fill="none" stroke="#b0b0b0" stroke-width="3"/>
<rect x="430.00" y="568.5" width="3" height="38.6" fill="#b0b0b0"/>
<text x="382.00" y="645.00" font-size="19" fill="#5b95e8" stroke="#5b95e8" stroke-width="0.6" stroke-linejoin="round" textLength="9.00" lengthAdjust="spacingAndGlyphs" >L</text>
<text x="473.60" y="645.00" font-size="19" fill="#5b95e8" stroke="#5b95e8" stroke-width="0.6" stroke-linejoin="round" textLength="10.40" lengthAdjust="spacingAndGlyphs" >R</text>
<text x="419.80" y="677.60" font-size="19" fill="#5b95e8" stroke="#5b95e8" stroke-width="0.6" stroke-linejoin="round" textLength="23.40" lengthAdjust="spacingAndGlyphs" >0.0</text>
<rect x="473.20" y="692.2" width="6.6" height="4.9" fill="#b4b4b4"/>
<path d="M479.20 694.8 L482.30 694.8 L482.30 703 L488.20 703" fill="none" stroke="#b4b4b4" stroke-width="1.6"/>
<rect x="488.20" y="694.10" width="5" height="5" fill="#b4b4b4"/>
<rect x="488.20" y="701.00" width="5" height="5" fill="#b4b4b4"/>
<rect x="488.20" y="707.70" width="5" height="5" fill="#b4b4b4"/>
<rect x="359.30" y="721.10" width="138.60" height="32.00" rx="6" fill="#0e0e0e" stroke="#303030" stroke-width="1.2"/>
<text x="373.70" y="744.30" font-size="19" fill="#b8b8b8" stroke="#b8b8b8" stroke-width="0.6" stroke-linejoin="round" textLength="40.00" lengthAdjust="spacingAndGlyphs" >Read</text>
<path d="M468.90 733.90 L475.70 740.50 L482.60 733.90" fill="none" stroke="#b8b8b8" stroke-width="3.0" stroke-linecap="round" stroke-linejoin="round"/>
<path d="M389.20 781.70 L389.20 771.10 Q389.20 770.10 390.20 770.10 L394.60 776.10 L399.00 770.10 Q400.00 770.10 400.00 771.10 L400.00 781.70" fill="none" stroke="#a8a8a8" stroke-width="1.65" stroke-linejoin="round"/>
<path d="M435.85 770.10 L429.05 770.10 Q428.25 770.10 428.25 770.90 L428.25 774.50 Q428.25 775.30 429.05 775.30 L434.85 775.30 Q435.65 775.30 435.65 776.10 L435.65 780.40 Q435.65 781.20 434.85 781.20 L427.85 781.20" fill="none" stroke="#a8a8a8" stroke-width="1.65"/>
<path d="M465.50 781.70 L465.50 770.10 L472.40 770.10 Q473.30 770.10 473.30 771.00 L473.30 774.70 Q473.30 775.60 472.40 775.60 L465.50 775.60 M471.20 775.60 Q473.30 775.60 473.30 777.60 L473.30 781.70" fill="none" stroke="#a8a8a8" stroke-width="1.65"/>
<text x="368.40" y="822.00" font-size="14.5" fill="#a8a8a8" stroke="#a8a8a8" stroke-width="0.6" stroke-linejoin="round" textLength="15.50" lengthAdjust="spacingAndGlyphs" >dB</text>
<rect x="413.90" y="809.00" width="53.5" height="13.00" fill="#3a3a3a"/>
<rect x="413.90" y="809.00" width="2.1" height="13.00" fill="#000"/>
<rect x="417.33" y="809.00" width="2.1" height="13.00" fill="#000"/>
<rect x="420.75" y="809.00" width="2.1" height="13.00" fill="#000"/>
<rect x="424.18" y="809.00" width="2.1" height="13.00" fill="#000"/>
<rect x="427.61" y="809.00" width="2.1" height="13.00" fill="#000"/>
<rect x="431.03" y="809.00" width="2.1" height="13.00" fill="#000"/>
<rect x="434.46" y="809.00" width="2.1" height="13.00" fill="#000"/>
<rect x="437.89" y="809.00" width="2.1" height="13.00" fill="#000"/>
<rect x="441.32" y="809.00" width="2.1" height="13.00" fill="#000"/>
<rect x="444.74" y="809.00" width="2.1" height="13.00" fill="#000"/>
<rect x="448.17" y="809.00" width="2.1" height="13.00" fill="#000"/>
<rect x="451.60" y="809.00" width="2.1" height="13.00" fill="#000"/>
<rect x="455.02" y="809.00" width="2.1" height="13.00" fill="#000"/>
<rect x="458.45" y="809.00" width="2.1" height="13.00" fill="#000"/>
<rect x="461.88" y="809.00" width="2.1" height="13.00" fill="#000"/>
<rect x="465.30" y="809.00" width="2.1" height="13.00" fill="#000"/>
<rect x="413.90" y="824.10" width="53.5" height="125.40" fill="#000"/>
<path d="M396.40 949.5 L396.40 827.20 Q396.40 826.20 398.10 826.20 Q399.80 826.20 399.80 827.20 L399.80 949.5" fill="none" stroke="#666" stroke-width="1.6"/>
<text x="369.80" y="840.50" font-size="13.5" fill="#b0b0b0" stroke="#b0b0b0" stroke-width="0.6" stroke-linejoin="round" textLength="14.40" lengthAdjust="spacingAndGlyphs" >15</text>
<text x="376.60" y="874.50" font-size="13.5" fill="#b0b0b0" stroke="#b0b0b0" stroke-width="0.6" stroke-linejoin="round" textLength="7.60" lengthAdjust="spacingAndGlyphs" >0</text>
<text x="372.00" y="912.10" font-size="13.5" fill="#b0b0b0" stroke="#b0b0b0" stroke-width="0.6" stroke-linejoin="round" textLength="12.20" lengthAdjust="spacingAndGlyphs" >-7</text>
<text x="365.20" y="939.50" font-size="13.5" fill="#b0b0b0" stroke="#b0b0b0" stroke-width="0.6" stroke-linejoin="round" textLength="19.00" lengthAdjust="spacingAndGlyphs" >-16</text>
<rect x="388.20" y="833.80" width="7.6" height="1.8" fill="#b8b8b8"/>
<rect x="394.00" y="833.80" width="1.6" height="3.2" fill="#b8b8b8"/>
<rect x="400.60" y="833.80" width="5.6" height="1.8" fill="#b8b8b8"/>
<rect x="388.20" y="905.60" width="7.6" height="1.8" fill="#b8b8b8"/>
<rect x="400.60" y="905.60" width="5.6" height="1.8" fill="#b8b8b8"/>
<rect x="388.20" y="933.00" width="7.6" height="1.8" fill="#b8b8b8"/>
<rect x="400.60" y="933.00" width="5.6" height="1.8" fill="#b8b8b8"/>
<rect x="393.90" y="900.00" width="1.6" height="1.6" fill="#b0b0b0"/>
<rect x="393.90" y="916.10" width="1.6" height="1.6" fill="#b0b0b0"/>
<rect x="393.90" y="926.10" width="1.6" height="1.6" fill="#b0b0b0"/>
<rect x="393.90" y="939.60" width="1.6" height="1.6" fill="#b0b0b0"/>
<rect x="393.90" y="944.80" width="1.6" height="1.6" fill="#b0b0b0"/>
<rect x="393.90" y="948.30" width="1.6" height="1.6" fill="#b0b0b0"/>
<rect x="389.20" y="844.90" width="18.4" height="48.6" rx="4.5" fill="#1e1e1e" stroke="#d6d6d6" stroke-width="3.6"/>
<rect x="394.20" y="867.40" width="8.4" height="3.4" rx="1.7" fill="#d6d6d6"/>
<rect x="468.40" y="825.70" width="7.2" height="1.8" fill="#b8b8b8"/>
<rect x="468.40" y="857.90" width="3.5" height="1.8" fill="#b8b8b8"/>
<rect x="468.40" y="888.60" width="3.5" height="1.8" fill="#b8b8b8"/>
<rect x="468.40" y="921.10" width="7.2" height="1.8" fill="#b8b8b8"/>
<text x="482.40" y="834.30" font-size="17.5" fill="#b8b8b8" stroke="#b8b8b8" stroke-width="0.6" stroke-linejoin="round" textLength="9.00" lengthAdjust="spacingAndGlyphs" >0</text>
<text x="481.90" y="930.00" font-size="17.5" fill="#b8b8b8" stroke="#b8b8b8" stroke-width="0.6" stroke-linejoin="round" textLength="23.50" lengthAdjust="spacingAndGlyphs" >-36</text>
<rect x="522.50" y="113.00" width="142.00" height="366.00" rx="8" fill="#080808" filter="url(#boxsh)"/>
<rect x="664.30" y="123.00" width="1.6" height="348.00" fill="#333" opacity="0.8"/>
<rect x="524.50" y="115.00" width="139.50" height="362.00" rx="6" fill="#a8a8a8"/>
<clipPath id="bc3"><rect x="524.50" y="115.00" width="139.50" height="362.00" rx="6"/></clipPath>
<g clip-path="url(#bc3)">
<rect x="524.50" y="115.00" width="139.50" height="13" fill="url(#topsh)"/>
<rect x="524.50" y="115.00" width="9" height="362.00" fill="url(#leftsh)"/>
<rect x="524.50" y="472.00" width="139.50" height="5" fill="url(#botsh)"/>
</g>
<rect x="661.40" y="115.00" width="2.6" height="362.00" fill="url(#rightsh)" clip-path="url(#bc3)"/>
<path d="M647.90 127.40 L656.70 127.40 L652.30 132.60 Z" fill="#c8c8c8" opacity="0.7"/>
<path d="M647.90 126.40 L656.70 126.40 L652.30 131.60 Z" fill="#868686"/>
<path d="M647.90 152.80 L656.70 152.80 L652.30 158.00 Z" fill="#c8c8c8" opacity="0.7"/>
<path d="M647.90 151.80 L656.70 151.80 L652.30 157.00 Z" fill="#868686"/>
<path d="M647.90 203.40 L656.70 203.40 L652.30 208.60 Z" fill="#c8c8c8" opacity="0.7"/>
<path d="M647.90 202.40 L656.70 202.40 L652.30 207.60 Z" fill="#868686"/>
<path d="M647.90 229.50 L656.70 229.50 L652.30 234.70 Z" fill="#c8c8c8" opacity="0.7"/>
<path d="M647.90 228.50 L656.70 228.50 L652.30 233.70 Z" fill="#868686"/>
<path d="M647.90 254.70 L656.70 254.70 L652.30 259.90 Z" fill="#c8c8c8" opacity="0.7"/>
<path d="M647.90 253.70 L656.70 253.70 L652.30 258.90 Z" fill="#868686"/>
<path d="M647.90 280.00 L656.70 280.00 L652.30 285.20 Z" fill="#c8c8c8" opacity="0.7"/>
<path d="M647.90 279.00 L656.70 279.00 L652.30 284.20 Z" fill="#868686"/>
<path d="M647.90 305.30 L656.70 305.30 L652.30 310.50 Z" fill="#c8c8c8" opacity="0.7"/>
<path d="M647.90 304.30 L656.70 304.30 L652.30 309.50 Z" fill="#868686"/>
<path d="M647.90 331.40 L656.70 331.40 L652.30 336.60 Z" fill="#c8c8c8" opacity="0.7"/>
<path d="M647.90 330.40 L656.70 330.40 L652.30 335.60 Z" fill="#868686"/>
<path d="M647.90 356.70 L656.70 356.70 L652.30 361.90 Z" fill="#c8c8c8" opacity="0.7"/>
<path d="M647.90 355.70 L656.70 355.70 L652.30 360.90 Z" fill="#868686"/>
<rect x="527.00" y="168.00" width="133.50" height="22.50" rx="3.5" fill="#ababab" stroke="#7a7a7a" stroke-width="1"/>
<rect x="642.70" y="168.00" width="1.3" height="22.50" fill="#7a7a7a"/>
<path d="M647.50 177.3 L657.10 177.3 L652.30 183.2 Z" fill="#111"/>
<text x="527.30" y="188.00" font-size="19.6" fill="#000000" stroke="#000000" stroke-width="0.6" stroke-linejoin="round" textLength="108.50" lengthAdjust="spacingAndGlyphs" >Eclipsa Audio</text>
<rect x="526.00" y="241.6" width="136.50" height="1.8" fill="#3c3c3c"/>
<path d="M526.00 376.50 Q526.00 370.50 531.00 370.50 L662.00 370.50" fill="none" stroke="#8e8e8e" stroke-width="1.2"/>
<circle cx="646.10" cy="384.40" r="14.4" fill="#6a6a6a" opacity="0.35"/>
<circle cx="646.10" cy="384.40" r="12.4" fill="#3e3e3e" stroke="#b8b8b8" stroke-width="2.1"/>
<path d="M648.70 376.80 C646.60 376.00 643.90 376.80 643.20 379.90 L639.40 392.90 M639.30 382.30 L646.90 382.30 M644.00 389.30 L653.50 381.80 M647.30 381.80 L651.50 389.60" fill="none" stroke="#b8b8b8" stroke-width="1.55" stroke-linecap="round"/>
<g opacity="0.75" filter="url(#blur2)"><circle cx="590.20" cy="373.90" r="1.35" fill="#d0d0d0"/><circle cx="571.90" cy="392.70" r="1.35" fill="#d0d0d0"/><circle cx="608.50" cy="392.70" r="1.35" fill="#d0d0d0"/><path d="M575.90 378.60 L578.20 380.90" stroke="#d0d0d0" stroke-width="3.6" stroke-linecap="round"/><path d="M604.50 378.60 L602.20 380.90" stroke="#d0d0d0" stroke-width="3.6" stroke-linecap="round"/><path d="M574.40 408.50 Q576.70 407.20 578.20 404.90" fill="none" stroke="#d0d0d0" stroke-width="4.4" stroke-linecap="round"/><path d="M606.00 408.50 Q603.70 407.20 602.20 404.90" fill="none" stroke="#d0d0d0" stroke-width="4.4" stroke-linecap="round"/></g>
<circle cx="590.20" cy="373.90" r="1.35" fill="#111"/><circle cx="571.90" cy="392.70" r="1.35" fill="#111"/><circle cx="608.50" cy="392.70" r="1.35" fill="#111"/><path d="M575.90 378.60 L578.20 380.90" stroke="#111" stroke-width="1.9" stroke-linecap="round"/><path d="M604.50 378.60 L602.20 380.90" stroke="#111" stroke-width="1.9" stroke-linecap="round"/><path d="M574.40 408.50 Q576.70 407.20 578.20 404.90" fill="none" stroke="#111" stroke-width="2.7" stroke-linecap="round"/><path d="M606.00 408.50 Q603.70 407.20 602.20 404.90" fill="none" stroke="#111" stroke-width="2.7" stroke-linecap="round"/>
<circle cx="590.20" cy="392.90" r="14.3" fill="url(#knobdark)"/>
<rect x="588.90" y="374.90" width="4" height="17" fill="#f0f0f0"/>
<text x="587.00" y="433.80" font-size="18" fill="#000" stroke="#000" stroke-width="0.6" stroke-linejoin="round" textLength="9.60" lengthAdjust="spacingAndGlyphs" >0</text>
<rect x="526.50" y="453.6" width="134.50" height="20" rx="5" fill="#adadad" stroke="#777" stroke-width="1.2"/>
<rect x="527.50" y="455" width="7" height="17" fill="url(#xbl)"/>
<path d="M645.30 459.8 L657.90 459.8 L651.60 466.6 Z" fill="#000"/>
<text x="587.00" y="471.60" font-size="18.5" fill="#000000" stroke="#000000" stroke-width="0.6" stroke-linejoin="round" textLength="10.60" lengthAdjust="spacingAndGlyphs" >X</text>
<rect x="520.90" y="483.10" width="138.60" height="32.00" rx="6" fill="#0e0e0e" stroke="#303030" stroke-width="1.2"/>
<text x="534.60" y="506.30" font-size="19" fill="#b8b8b8" stroke="#b8b8b8" stroke-width="0.6" stroke-linejoin="round" textLength="70.80" lengthAdjust="spacingAndGlyphs" >System…</text>
<path d="M630.50 495.90 L637.30 502.50 L644.20 495.90" fill="none" stroke="#b8b8b8" stroke-width="3.0" stroke-linecap="round" stroke-linejoin="round"/>
<rect x="520.90" y="522.10" width="138.60" height="32.00" rx="6" fill="#0e0e0e" stroke="#303030" stroke-width="1.2"/>
<text x="535.80" y="545.30" font-size="19" fill="#b8b8b8" stroke="#b8b8b8" stroke-width="0.6" stroke-linejoin="round" textLength="30.00" lengthAdjust="spacingAndGlyphs" >Mix</text>
<path d="M630.50 534.90 L637.30 541.50 L644.20 534.90" fill="none" stroke="#b8b8b8" stroke-width="3.0" stroke-linecap="round" stroke-linejoin="round"/>
<circle cx="593.10" cy="606.7" r="37.5" fill="none" stroke="#b0b0b0" stroke-width="3"/>
<rect x="591.60" y="568.5" width="3" height="38.6" fill="#b0b0b0"/>
<text x="543.60" y="645.00" font-size="19" fill="#5b95e8" stroke="#5b95e8" stroke-width="0.6" stroke-linejoin="round" textLength="9.00" lengthAdjust="spacingAndGlyphs" >L</text>
<text x="635.20" y="645.00" font-size="19" fill="#5b95e8" stroke="#5b95e8" stroke-width="0.6" stroke-linejoin="round" textLength="10.40" lengthAdjust="spacingAndGlyphs" >R</text>
<text x="581.40" y="677.60" font-size="19" fill="#5b95e8" stroke="#5b95e8" stroke-width="0.6" stroke-linejoin="round" textLength="23.40" lengthAdjust="spacingAndGlyphs" >0.0</text>
<rect x="634.80" y="692.2" width="6.6" height="4.9" fill="#b4b4b4"/>
<path d="M640.80 694.8 L643.90 694.8 L643.90 703 L649.80 703" fill="none" stroke="#b4b4b4" stroke-width="1.6"/>
<rect x="649.80" y="694.10" width="5" height="5" fill="#b4b4b4"/>
<rect x="649.80" y="701.00" width="5" height="5" fill="#b4b4b4"/>
<rect x="649.80" y="707.70" width="5" height="5" fill="#b4b4b4"/>
<rect x="520.90" y="721.10" width="138.60" height="32.00" rx="6" fill="#0e0e0e" stroke="#303030" stroke-width="1.2"/>
<text x="535.30" y="744.30" font-size="19" fill="#b8b8b8" stroke="#b8b8b8" stroke-width="0.6" stroke-linejoin="round" textLength="40.00" lengthAdjust="spacingAndGlyphs" >Read</text>
<path d="M630.50 733.90 L637.30 740.50 L644.20 733.90" fill="none" stroke="#b8b8b8" stroke-width="3.0" stroke-linecap="round" stroke-linejoin="round"/>
<path d="M550.80 781.70 L550.80 771.10 Q550.80 770.10 551.80 770.10 L556.20 776.10 L560.60 770.10 Q561.60 770.10 561.60 771.10 L561.60 781.70" fill="none" stroke="#a8a8a8" stroke-width="1.65" stroke-linejoin="round"/>
<path d="M597.45 770.10 L590.65 770.10 Q589.85 770.10 589.85 770.90 L589.85 774.50 Q589.85 775.30 590.65 775.30 L596.45 775.30 Q597.25 775.30 597.25 776.10 L597.25 780.40 Q597.25 781.20 596.45 781.20 L589.45 781.20" fill="none" stroke="#a8a8a8" stroke-width="1.65"/>
<path d="M627.10 781.70 L627.10 770.10 L634.00 770.10 Q634.90 770.10 634.90 771.00 L634.90 774.70 Q634.90 775.60 634.00 775.60 L627.10 775.60 M632.80 775.60 Q634.90 775.60 634.90 777.60 L634.90 781.70" fill="none" stroke="#a8a8a8" stroke-width="1.65"/>
<text x="530.00" y="822.00" font-size="14.5" fill="#a8a8a8" stroke="#a8a8a8" stroke-width="0.6" stroke-linejoin="round" textLength="15.50" lengthAdjust="spacingAndGlyphs" >dB</text>
<rect x="575.50" y="809.00" width="53.5" height="13.00" fill="#3a3a3a"/>
<rect x="575.50" y="809.00" width="2.1" height="13.00" fill="#000"/>
<rect x="578.93" y="809.00" width="2.1" height="13.00" fill="#000"/>
<rect x="582.35" y="809.00" width="2.1" height="13.00" fill="#000"/>
<rect x="585.78" y="809.00" width="2.1" height="13.00" fill="#000"/>
<rect x="589.21" y="809.00" width="2.1" height="13.00" fill="#000"/>
<rect x="592.63" y="809.00" width="2.1" height="13.00" fill="#000"/>
<rect x="596.06" y="809.00" width="2.1" height="13.00" fill="#000"/>
<rect x="599.49" y="809.00" width="2.1" height="13.00" fill="#000"/>
<rect x="602.92" y="809.00" width="2.1" height="13.00" fill="#000"/>
<rect x="606.34" y="809.00" width="2.1" height="13.00" fill="#000"/>
<rect x="609.77" y="809.00" width="2.1" height="13.00" fill="#000"/>
<rect x="613.20" y="809.00" width="2.1" height="13.00" fill="#000"/>
<rect x="616.62" y="809.00" width="2.1" height="13.00" fill="#000"/>
<rect x="620.05" y="809.00" width="2.1" height="13.00" fill="#000"/>
<rect x="623.48" y="809.00" width="2.1" height="13.00" fill="#000"/>
<rect x="626.90" y="809.00" width="2.1" height="13.00" fill="#000"/>
<rect x="575.50" y="824.10" width="53.5" height="125.40" fill="#000"/>
<path d="M558.00 949.5 L558.00 827.20 Q558.00 826.20 559.70 826.20 Q561.40 826.20 561.40 827.20 L561.40 949.5" fill="none" stroke="#666" stroke-width="1.6"/>
<text x="531.40" y="840.50" font-size="13.5" fill="#b0b0b0" stroke="#b0b0b0" stroke-width="0.6" stroke-linejoin="round" textLength="14.40" lengthAdjust="spacingAndGlyphs" >15</text>
<text x="538.20" y="874.50" font-size="13.5" fill="#b0b0b0" stroke="#b0b0b0" stroke-width="0.6" stroke-linejoin="round" textLength="7.60" lengthAdjust="spacingAndGlyphs" >0</text>
<text x="533.60" y="912.10" font-size="13.5" fill="#b0b0b0" stroke="#b0b0b0" stroke-width="0.6" stroke-linejoin="round" textLength="12.20" lengthAdjust="spacingAndGlyphs" >-7</text>
<text x="526.80" y="939.50" font-size="13.5" fill="#b0b0b0" stroke="#b0b0b0" stroke-width="0.6" stroke-linejoin="round" textLength="19.00" lengthAdjust="spacingAndGlyphs" >-16</text>
<rect x="549.80" y="833.80" width="7.6" height="1.8" fill="#b8b8b8"/>
<rect x="555.60" y="833.80" width="1.6" height="3.2" fill="#b8b8b8"/>
<rect x="562.20" y="833.80" width="5.6" height="1.8" fill="#b8b8b8"/>
<rect x="549.80" y="905.60" width="7.6" height="1.8" fill="#b8b8b8"/>
<rect x="562.20" y="905.60" width="5.6" height="1.8" fill="#b8b8b8"/>
<rect x="549.80" y="933.00" width="7.6" height="1.8" fill="#b8b8b8"/>
<rect x="562.20" y="933.00" width="5.6" height="1.8" fill="#b8b8b8"/>
<rect x="555.50" y="900.00" width="1.6" height="1.6" fill="#b0b0b0"/>
<rect x="555.50" y="916.10" width="1.6" height="1.6" fill="#b0b0b0"/>
<rect x="555.50" y="926.10" width="1.6" height="1.6" fill="#b0b0b0"/>
<rect x="555.50" y="939.60" width="1.6" height="1.6" fill="#b0b0b0"/>
<rect x="555.50" y="944.80" width="1.6" height="1.6" fill="#b0b0b0"/>
<rect x="555.50" y="948.30" width="1.6" height="1.6" fill="#b0b0b0"/>
<rect x="550.80" y="844.90" width="18.4" height="48.6" rx="4.5" fill="#1e1e1e" stroke="#d6d6d6" stroke-width="3.6"/>
<rect x="555.80" y="867.40" width="8.4" height="3.4" rx="1.7" fill="#d6d6d6"/>
<rect x="630.00" y="825.70" width="7.2" height="1.8" fill="#b8b8b8"/>
<rect x="630.00" y="857.90" width="3.5" height="1.8" fill="#b8b8b8"/>
<rect x="630.00" y="888.60" width="3.5" height="1.8" fill="#b8b8b8"/>
<rect x="630.00" y="921.10" width="7.2" height="1.8" fill="#b8b8b8"/>
<text x="644.00" y="834.30" font-size="17.5" fill="#b8b8b8" stroke="#b8b8b8" stroke-width="0.6" stroke-linejoin="round" textLength="9.00" lengthAdjust="spacingAndGlyphs" >0</text>
<text x="643.50" y="930.00" font-size="17.5" fill="#b8b8b8" stroke="#b8b8b8" stroke-width="0.6" stroke-linejoin="round" textLength="23.50" lengthAdjust="spacingAndGlyphs" >-36</text>
<rect x="684.10" y="113.00" width="142.00" height="366.00" rx="8" fill="#080808" filter="url(#boxsh)"/>
<rect x="825.90" y="123.00" width="1.6" height="348.00" fill="#333" opacity="0.8"/>
<rect x="686.10" y="115.00" width="139.50" height="362.00" rx="6" fill="#a8a8a8"/>
<clipPath id="bc4"><rect x="686.10" y="115.00" width="139.50" height="362.00" rx="6"/></clipPath>
<g clip-path="url(#bc4)">
<rect x="686.10" y="115.00" width="139.50" height="13" fill="url(#topsh)"/>
<rect x="686.10" y="115.00" width="9" height="362.00" fill="url(#leftsh)"/>
<rect x="686.10" y="472.00" width="139.50" height="5" fill="url(#botsh)"/>
</g>
<rect x="823.00" y="115.00" width="2.6" height="362.00" fill="url(#rightsh)" clip-path="url(#bc4)"/>
<path d="M809.50 127.40 L818.30 127.40 L813.90 132.60 Z" fill="#c8c8c8" opacity="0.7"/>
<path d="M809.50 126.40 L818.30 126.40 L813.90 131.60 Z" fill="#868686"/>
<path d="M809.50 152.80 L818.30 152.80 L813.90 158.00 Z" fill="#c8c8c8" opacity="0.7"/>
<path d="M809.50 151.80 L818.30 151.80 L813.90 157.00 Z" fill="#868686"/>
<path d="M809.50 203.40 L818.30 203.40 L813.90 208.60 Z" fill="#c8c8c8" opacity="0.7"/>
<path d="M809.50 202.40 L818.30 202.40 L813.90 207.60 Z" fill="#868686"/>
<path d="M809.50 229.50 L818.30 229.50 L813.90 234.70 Z" fill="#c8c8c8" opacity="0.7"/>
<path d="M809.50 228.50 L818.30 228.50 L813.90 233.70 Z" fill="#868686"/>
<rect x="688.60" y="168.00" width="133.50" height="22.50" rx="3.5" fill="#ababab" stroke="#7a7a7a" stroke-width="1"/>
<rect x="804.30" y="168.00" width="1.3" height="22.50" fill="#7a7a7a"/>
<path d="M809.10 177.3 L818.70 177.3 L813.90 183.2 Z" fill="#111"/>
<text x="688.90" y="188.00" font-size="19.6" fill="#000000" stroke="#000000" stroke-width="0.6" stroke-linejoin="round" textLength="108.50" lengthAdjust="spacingAndGlyphs" >Eclipsa Audio</text>
<path d="M687.60 376.50 Q687.60 370.50 692.60 370.50 L823.60 370.50" fill="none" stroke="#8e8e8e" stroke-width="1.2"/>
<circle cx="807.70" cy="384.40" r="14.4" fill="#6a6a6a" opacity="0.35"/>
<circle cx="807.70" cy="384.40" r="12.4" fill="#3e3e3e" stroke="#b8b8b8" stroke-width="2.1"/>
<path d="M810.30 376.80 C808.20 376.00 805.50 376.80 804.80 379.90 L801.00 392.90 M800.90 382.30 L808.50 382.30 M805.60 389.30 L815.10 381.80 M808.90 381.80 L813.10 389.60" fill="none" stroke="#b8b8b8" stroke-width="1.55" stroke-linecap="round"/>
<rect x="682.30" y="683.90" width="139.00" height="32.00" rx="6" fill="#0e0e0e" stroke="#303030" stroke-width="1.2"/>
<text x="697.40" y="707.10" font-size="19" fill="#b8b8b8" stroke="#b8b8b8" stroke-width="0.6" stroke-linejoin="round" textLength="19.60" lengthAdjust="spacingAndGlyphs" >16</text>
<path d="M791.90 696.70 L798.70 703.30 L805.60 696.70" fill="none" stroke="#b8b8b8" stroke-width="3.0" stroke-linecap="round" stroke-linejoin="round"/>
<rect x="682.30" y="721.10" width="139.00" height="32.00" rx="6" fill="#0e0e0e" stroke="#303030" stroke-width="1.2"/>
<text x="696.90" y="744.30" font-size="19" fill="#b8b8b8" stroke="#b8b8b8" stroke-width="0.6" stroke-linejoin="round" textLength="40.00" lengthAdjust="spacingAndGlyphs" >Read</text>
<path d="M791.90 733.90 L798.70 740.50 L805.60 733.90" fill="none" stroke="#b8b8b8" stroke-width="3.0" stroke-linecap="round" stroke-linejoin="round"/>
<path d="M745.9 765.7 L751.4 770.8 L754.7 770.8 L754.7 776.2 L751.4 776.2 L745.9 781.9 Z M764.9 765.7 L758.9 770.8 L755.9 770.8 L755.9 776.2 L758.9 776.2 L764.9 781.9 Z" fill="#b4b4b4"/>
<text x="691.60" y="819.40" font-size="14.5" fill="#a8a8a8" stroke="#a8a8a8" stroke-width="0.6" stroke-linejoin="round" textLength="15.50" lengthAdjust="spacingAndGlyphs" >dB</text>
<rect x="737.10" y="805.00" width="53.5" height="14.00" fill="#3a3a3a"/>
<rect x="737.10" y="805.00" width="2.1" height="14.00" fill="#000"/>
<rect x="740.53" y="805.00" width="2.1" height="14.00" fill="#000"/>
<rect x="743.95" y="805.00" width="2.1" height="14.00" fill="#000"/>
<rect x="747.38" y="805.00" width="2.1" height="14.00" fill="#000"/>
<rect x="750.81" y="805.00" width="2.1" height="14.00" fill="#000"/>
<rect x="754.24" y="805.00" width="2.1" height="14.00" fill="#000"/>
<rect x="757.66" y="805.00" width="2.1" height="14.00" fill="#000"/>
<rect x="761.09" y="805.00" width="2.1" height="14.00" fill="#000"/>
<rect x="764.52" y="805.00" width="2.1" height="14.00" fill="#000"/>
<rect x="767.94" y="805.00" width="2.1" height="14.00" fill="#000"/>
<rect x="771.37" y="805.00" width="2.1" height="14.00" fill="#000"/>
<rect x="774.80" y="805.00" width="2.1" height="14.00" fill="#000"/>
<rect x="778.22" y="805.00" width="2.1" height="14.00" fill="#000"/>
<rect x="781.65" y="805.00" width="2.1" height="14.00" fill="#000"/>
<rect x="785.08" y="805.00" width="2.1" height="14.00" fill="#000"/>
<rect x="788.50" y="805.00" width="2.1" height="14.00" fill="#000"/>
<rect x="737.10" y="820.50" width="53.5" height="129.00" fill="#000"/>
<path d="M719.60 949.5 L719.60 823.20 Q719.60 822.20 721.30 822.20 Q723.00 822.20 723.00 823.20 L723.00 949.5" fill="none" stroke="#666" stroke-width="1.6"/>
<text x="693.00" y="837.00" font-size="13.5" fill="#b0b0b0" stroke="#b0b0b0" stroke-width="0.6" stroke-linejoin="round" textLength="14.40" lengthAdjust="spacingAndGlyphs" >15</text>
<text x="699.80" y="871.00" font-size="13.5" fill="#b0b0b0" stroke="#b0b0b0" stroke-width="0.6" stroke-linejoin="round" textLength="7.60" lengthAdjust="spacingAndGlyphs" >0</text>
<text x="695.20" y="910.30" font-size="13.5" fill="#b0b0b0" stroke="#b0b0b0" stroke-width="0.6" stroke-linejoin="round" textLength="12.20" lengthAdjust="spacingAndGlyphs" >-7</text>
<text x="688.40" y="938.90" font-size="13.5" fill="#b0b0b0" stroke="#b0b0b0" stroke-width="0.6" stroke-linejoin="round" textLength="19.00" lengthAdjust="spacingAndGlyphs" >-16</text>
<rect x="711.40" y="830.90" width="7.6" height="1.8" fill="#b8b8b8"/>
<rect x="717.20" y="830.90" width="1.6" height="3.2" fill="#b8b8b8"/>
<rect x="723.80" y="830.90" width="5.6" height="1.8" fill="#b8b8b8"/>
<rect x="711.40" y="903.80" width="7.6" height="1.8" fill="#b8b8b8"/>
<rect x="723.80" y="903.80" width="5.6" height="1.8" fill="#b8b8b8"/>
<rect x="711.40" y="932.60" width="7.6" height="1.8" fill="#b8b8b8"/>
<rect x="723.80" y="932.60" width="5.6" height="1.8" fill="#b8b8b8"/>
<rect x="717.10" y="894.70" width="1.6" height="1.6" fill="#b0b0b0"/>
<rect x="717.10" y="900.00" width="1.6" height="1.6" fill="#b0b0b0"/>
<rect x="717.10" y="916.10" width="1.6" height="1.6" fill="#b0b0b0"/>
<rect x="717.10" y="924.20" width="1.6" height="1.6" fill="#b0b0b0"/>
<rect x="717.10" y="939.60" width="1.6" height="1.6" fill="#b0b0b0"/>
<rect x="717.10" y="944.80" width="1.6" height="1.6" fill="#b0b0b0"/>
<rect x="717.10" y="948.30" width="1.6" height="1.6" fill="#b0b0b0"/>
<rect x="712.40" y="840.80" width="18.4" height="48.6" rx="4.5" fill="#1e1e1e" stroke="#d6d6d6" stroke-width="3.6"/>
<rect x="717.40" y="863.30" width="8.4" height="3.4" rx="1.7" fill="#d6d6d6"/>
<rect x="791.60" y="821.90" width="7.2" height="1.8" fill="#b8b8b8"/>
<rect x="791.60" y="854.30" width="3.5" height="1.8" fill="#b8b8b8"/>
<rect x="791.60" y="886.80" width="3.5" height="1.8" fill="#b8b8b8"/>
<rect x="791.60" y="918.90" width="7.2" height="1.8" fill="#b8b8b8"/>
<text x="805.90" y="830.50" font-size="17.5" fill="#b8b8b8" stroke="#b8b8b8" stroke-width="0.6" stroke-linejoin="round" textLength="8.60" lengthAdjust="spacingAndGlyphs" >0</text>
<text x="805.10" y="927.80" font-size="17.5" fill="#b8b8b8" stroke="#b8b8b8" stroke-width="0.6" stroke-linejoin="round" textLength="24.00" lengthAdjust="spacingAndGlyphs" >-36</text>
<rect x="22.2" y="514.8" width="637.7" height="50" rx="19.5" fill="none" stroke="#e6432a" stroke-width="5.4"/>
<text x="28.40" y="1013.90" font-size="19" fill="#5b95e8" stroke="#5b95e8" stroke-width="0.6" stroke-linejoin="round" textLength="96.30" lengthAdjust="spacingAndGlyphs" >00:00:00:00</text>
<path d="M796.1 996.3 L796.1 1003.8 L793 1005.3 L796.1 1006.8 L796.1 1014" fill="none" stroke="#b4b4b4" stroke-width="3" stroke-linecap="round" stroke-linejoin="round"/>
<path d="M799.5 1005.3 L806.8 999 L806.8 1002.8 L813 1002.8 L813 1007.8 L806.8 1007.8 L806.8 1011.6 Z" fill="#b4b4b4"/>
<path d="M855.7 996.3 L855.7 1003.8 L858.8 1005.3 L855.7 1006.8 L855.7 1014" fill="none" stroke="#b4b4b4" stroke-width="3" stroke-linecap="round" stroke-linejoin="round"/>
<path d="M852.5 1005.3 L845.2 999 L845.2 1002.8 L839.2 1002.8 L839.2 1007.8 L845.2 1007.8 L845.2 1011.6 Z" fill="#b4b4b4"/>
<path d="M890 998.2 L904 1005 L890 1011.8 Z" fill="#b4b4b4" stroke="#b4b4b4" stroke-width="0.8" stroke-linejoin="round"/>
<path d="M936.2 996.3 L936.2 1003.8 L932.6 1005.1 L936.2 1006.4 L936.2 1014" fill="none" stroke="#b4b4b4" stroke-width="2.8" stroke-linecap="round" stroke-linejoin="round"/>
<path d="M940.6 1000 L950.8 1005.1 L940.6 1010.1 Z" fill="#b4b4b4"/>
<path d="M954.1 996.3 L954.1 1003.8 L957.6 1005.1 L954.1 1006.4 L954.1 1014" fill="none" stroke="#b4b4b4" stroke-width="2.8" stroke-linecap="round" stroke-linejoin="round"/>
<path d="M982 1000 L988.3 1000 L988.3 1003 L985.1 1003 L985.1 1010.3 L1000 1010.3 L1000 1005.6 L1003.3 1003.3 L1003.3 1013.7 L982 1013.7 Z" fill="#b4b4b4"/>
<path d="M991 996.6 L1001.6 1001.3 L991 1006 Z" fill="#b4b4b4"/>
<circle cx="1040.2" cy="1006" r="7.8" fill="#e2503f"/>
<rect x="0" y="1033.1" width="1182" height="2.9" fill="#000"/>
<rect x="0" y="1031.2" width="1182" height="1.95" fill="#4f88e0"/>
</svg></body></html>
